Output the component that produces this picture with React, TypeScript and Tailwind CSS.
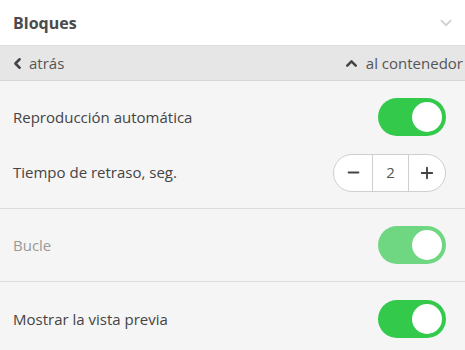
import { ChevronDown, ChevronLeft, ChevronUp, Minus, Plus } from "lucide-react"

function Toggle({ dim = false }: { dim?: boolean }) {
  return (
    <div
      className={`flex h-[38px] w-[68px] items-center justify-end rounded-full pr-[4px] ${
        dim ? "bg-[#6fd682]" : "bg-[#33c94b]"
      }`}
    >
      <div className="h-[30px] w-[30px] rounded-full bg-white" />
    </div>
  )
}

export default function App() {
  return (
    <div className="h-[350px] w-[465px] overflow-hidden bg-[#f5f5f5] font-['Open_Sans',sans-serif] text-[#444]">
      {/* Header */}
      <div className="flex h-[46px] items-center justify-between border-b border-[#dcdcdc] bg-white pl-[13px] pr-[10px]">
        <span className="text-[16px] font-bold text-[#4a4a4a]">Bloques</span>
        <ChevronDown className="h-[18px] w-[18px] text-[#d2d2d2]" strokeWidth={2.5} />
      </div>

      {/* Nav bar */}
      <div className="flex h-[35px] items-center justify-between border-b border-[#d6d6d6] bg-[#e6e6e6] pl-[9px] pr-[2px] text-[15px] text-[#555]">
        <div className="flex items-center gap-[3px]">
          <ChevronLeft className="h-[17px] w-[17px] text-[#444]" strokeWidth={3.5} />
          <span>atrás</span>
        </div>
        <div className="flex items-center gap-[6px]">
          <ChevronUp className="h-[17px] w-[17px] text-[#444]" strokeWidth={3.5} />
          <span>al contenedor</span>
        </div>
      </div>

      {/* Settings */}
      <div className="pl-[13px] pr-[19px] text-[15px]">
        <div className="flex h-[72px] items-center justify-between">
          <span>Reproducción automática</span>
          <Toggle />
        </div>
        <div className="flex h-[39px] items-center justify-between">
          <span>Tiempo de retraso, seg.</span>
          <div className="flex h-[38px] w-[113px] items-stretch overflow-hidden rounded-full border border-[#cfcfcf] bg-white">
            <div className="flex w-[38px] items-center justify-center">
              <Minus className="h-[17px] w-[17px] text-[#444]" strokeWidth={2.5} />
            </div>
            <div className="flex w-[37px] items-center justify-center border-x border-[#cfcfcf] text-[15px] text-[#555]">
              2
            </div>
            <div className="flex flex-1 items-center justify-center">
              <Plus className="h-[18px] w-[18px] text-[#444]" strokeWidth={2.5} />
            </div>
          </div>
        </div>
      </div>
      <div className="mt-[16px] border-b border-[#dcdcdc]" />

      <div className="flex h-[72px] items-center justify-between pl-[13px] pr-[19px] text-[15px]">
        <span className="text-[#999]">Bucle</span>
        <Toggle dim />
      </div>
      <div className="border-b border-[#dcdcdc]" />

      <div className="flex h-[74px] items-center justify-between pl-[13px] pr-[19px] text-[15px]">
        <span>Mostrar la vista previa</span>
        <Toggle />
      </div>
    </div>
  )
}
